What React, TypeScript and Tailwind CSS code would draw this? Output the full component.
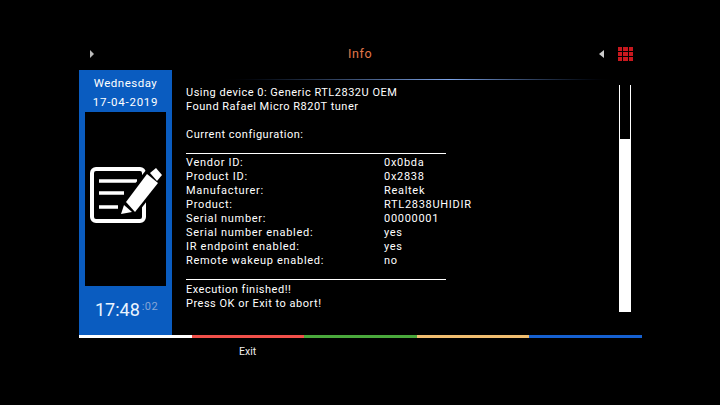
const font = "font-['Roboto',sans-serif]";

const rows = [
  ["Vendor ID:", "0x0bda"],
  ["Product ID:", "0x2838"],
  ["Manufacturer:", "Realtek"],
  ["Product:", "RTL2838UHIDIR"],
  ["Serial number:", "00000001"],
  ["Serial number enabled:", "yes"],
  ["IR endpoint enabled:", "yes"],
  ["Remote wakeup enabled:", "no"],
];

function EditIcon() {
  return (
    <svg width="74" height="58" viewBox="0 0 74 58" fill="none">
      <rect x="2" y="2" width="52" height="52" rx="4" stroke="#fff" strokeWidth="4" />
      <path d="M9 14h38M9 26h25M9 40h19" stroke="#fff" strokeWidth="3.5" />
      {/* black halo so the pencil cuts through the frame */}
      <path d="M27 51l4-17L57 2l15 13-26 33z" fill="#000" />
      <path d="M31 47l3-9 8 7z" fill="#fff" />
      <path d="M36 35L57 7l11 9-23 29z" fill="#fff" />
      <path d="M60 6l6-5 6 7-5 6z" fill="#fff" />
    </svg>
  );
}

function GridIcon() {
  return (
    <div className="grid grid-cols-3 gap-px w-[15px]">
      {Array.from({ length: 9 }).map((_, i) => (
        <div key={i} className="h-[4px] bg-[#c8181e]" />
      ))}
    </div>
  );
}

export default function App() {
  return (
    <div className={`w-[720px] h-[405px] bg-black overflow-hidden flex flex-col pl-[79px] pr-[78px] pt-[46px] ${font}`}>
      {/* Header */}
      <div className="h-[16px] flex items-center justify-between pl-[11px] pr-[9px]">
        <div className="w-0 h-0 border-y-[4px] border-y-transparent border-l-[4px] border-l-[#bbbbbb]" />
        <div className="ml-[254px] text-[12.5px] tracking-[0.6px] text-[#e2784a]">Info</div>
        <div className="ml-auto mr-[14px] w-0 h-0 border-y-[4px] border-y-transparent border-r-[5px] border-r-[#cccccc]" />
        <GridIcon />
      </div>

      {/* Main */}
      <div className="mt-[8px] h-[265px] flex">
        <div className="w-[93px] bg-[#0a5cc0] flex flex-col items-center text-white">
          <div className="h-[42px] w-full flex flex-col items-center pt-[4px] text-[11.5px] leading-[18.5px] tracking-[0.5px]">
            <div>Wednesday</div>
            <div className="tracking-[0.75px]">17-04-2019</div>
          </div>
          <div className="w-[81px] h-[174px] bg-black flex items-start pl-[5px] pt-[55px]">
            <EditIcon />
          </div>
          <div className="flex-1 flex items-center pl-[2px] -mt-[3px]">
            <span className="text-[18px] text-[#eaf4ff]">17:48</span>
            <span className="text-[11px] tracking-[0.4px] text-[#86a6d6] ml-[2px] -mt-[4px]">:02</span>
          </div>
        </div>

        <div className="flex-1 relative">
          <div className="absolute left-[38px] right-[20px] top-[9px] h-px bg-gradient-to-r from-black via-[#7fa6ea] via-[58%] to-black" />
          <div className="flex pl-[14px] pt-[16px] pr-[11px] h-full">
            <div className="flex-1 text-[11px] leading-[14px] tracking-[0.5px] text-white">
              <div>Using device 0: Generic RTL2832U OEM</div>
              <div>Found Rafael Micro R820T tuner</div>
              <div className="h-[14px]" />
              <div>Current configuration:</div>
              <div className="w-[260px] h-px bg-white mt-[11px] mb-[2px]" />
              {rows.map(([k, v]) => (
                <div key={k} className="flex tracking-[0.7px]">
                  <div className="w-[198px]">{k}</div>
                  <div>{v}</div>
                </div>
              ))}
              <div className="w-[260px] h-px bg-white mt-[11px] mb-[3px]" />
              <div>Execution finished!!</div>
              <div>Press OK or Exit to abort!</div>
            </div>
            <div className="w-[12px] h-[227px] -mt-px border-x border-white flex flex-col justify-end">
              <div className="h-[173px] -mx-px bg-white" />
            </div>
          </div>
        </div>
      </div>

      {/* Colour bar */}
      <div className="h-[3px] flex">
        <div className="w-[113px] bg-white" />
        <div className="w-[112px] bg-[#f0504a]" />
        <div className="w-[113px] bg-[#4aa83c]" />
        <div className="w-[112px] bg-[#f0be70]" />
        <div className="w-[113px] bg-[#1560d0]" />
      </div>

      <div className="pl-[160px] mt-[7px] text-[10.5px] leading-[14px] text-[#eeeeee]">Exit</div>
    </div>
  );
}
